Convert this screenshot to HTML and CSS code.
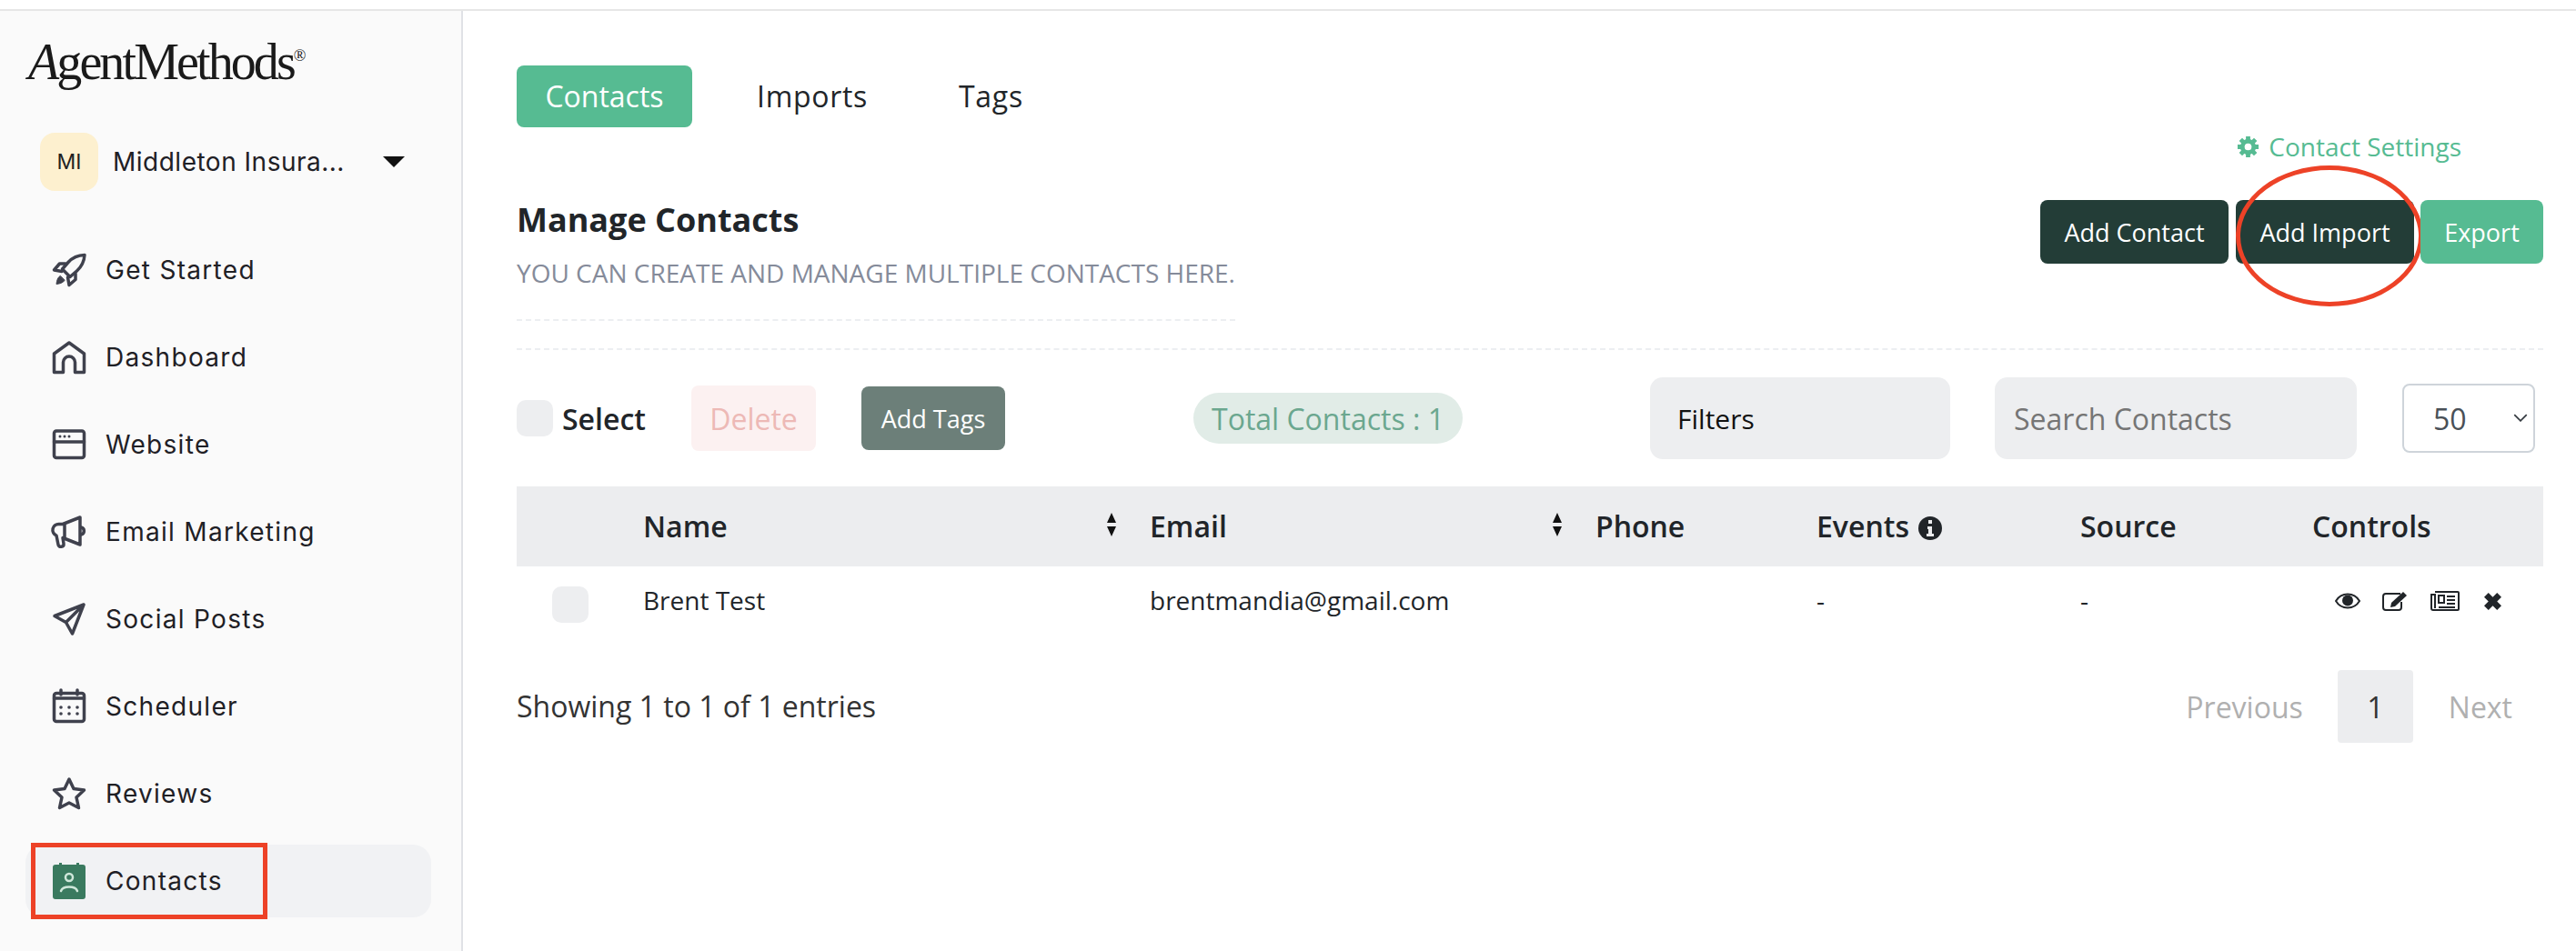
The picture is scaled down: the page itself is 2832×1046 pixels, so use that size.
FILE: index.html
```html
<!DOCTYPE html>
<html>
<head>
    <title>Contacts</title>
    <link rel="stylesheet" href="styles.css">
</head>
<body>

<div class="page">
    <aside class="sidebar">
        <div class="logo"><i>A</i>gentMethods<sup>®</sup></div>

        <div class="account">
            <span class="avatar">MI</span>
            <span class="account-name">Middleton Insura...</span>
            <span class="caret"></span>
        </div>

        <nav class="nav">
            <a class="nav-item">
                <svg class="nav-icon" viewBox="0 0 36 36">
                    <path d="M35 1.500c-7.500.2-13.500 3-18 8L10.500 17l8.500 8.500 7.500-6.500c5-4.500 8-10.500 8.500-17.500z"/>
                    <path d="M14 11H7.500L1.500 18l8.500 1.500M25 22v6.500L18 34.500 16.500 26"/>
                    <path class="solid" d="M8 24.500c-2.500 1.500-3.500 5-4 9 4-.5 7.500-1.500 9-4z"/>
                </svg>
                Get Started
            </a>
            <a class="nav-item">
                <svg class="nav-icon" viewBox="0 0 36 36">
                    <path d="M18 2 L34.500 14 V34.500 H24.500 V23.500 a6.500 6.500 0 0 0 -13 0 V34.500 H1.500 V14 Z"/>
                </svg>
                Dashboard
            </a>
            <a class="nav-item">
                <svg class="nav-icon" viewBox="0 0 36 36">
                    <rect x="1.500" y="3" width="33" height="29.500" rx="2.500"/>
                    <path d="M1.500 15H34.500"/>
                    <g class="dots"><circle cx="8" cy="9" r="1.500"/><circle cx="13" cy="9" r="1.500"/><circle cx="18" cy="9" r="1.500"/></g>
                </svg>
                Website
            </a>
            <a class="nav-item">
                <svg class="nav-icon" viewBox="0 0 36 36">
                    <path d="M30 2 L11 9.500 H7 a6.500 6.500 0 0 0 -3 12.500 L6 32 c.5 3.500 6.500 3 6-1 L11 24.500 L30 32 Z"/>
                    <path d="M13 10V24M31 13c4.500 1 4.500 7 0 8"/>
                </svg>
                Email Marketing
            </a>
            <a class="nav-item">
                <svg class="nav-icon" viewBox="0 0 36 36">
                    <path d="M34 2 L2 14.500 L14.500 21.500 L21.500 34 Z M34 2 L14.500 21.500"/>
                </svg>
                Social Posts
            </a>
            <a class="nav-item">
                <svg class="nav-icon" viewBox="0 0 36 36">
                    <rect x="1.500" y="3.500" width="33" height="31" rx="2.500"/>
                    <path d="M1.500 9H34.500M9 0V5M27 0V5"/>
                    <g class="dots">
                        <circle cx="9" cy="19" r="1.800"/><circle cx="18" cy="19" r="1.800"/><circle cx="27" cy="19" r="1.800"/>
                        <circle cx="9" cy="26" r="1.800"/><circle cx="18" cy="26" r="1.800"/><circle cx="27" cy="26" r="1.800"/>
                    </g>
                </svg>
                Scheduler
            </a>
            <a class="nav-item">
                <svg class="nav-icon" viewBox="0 0 36 36">
                    <path d="M18 2 L23 12.500 L34.500 14 L26 22 L28.500 33.500 L18 28 L7.500 33.500 L10 22 L1.500 14 L13 12.500 Z"/>
                </svg>
                Reviews
            </a>
            <a class="nav-item nav-active">
                <svg class="nav-icon" viewBox="0 0 36 40">
                    <path class="solid-green" d="M3 2h4V0h3v2h16V0h3v2h4a3 3 0 0 1 3 3v32a3 3 0 0 1-3 3H3a3 3 0 0 1-3-3V5a3 3 0 0 1 3-3z"/>
                    <circle class="light-line" cx="18" cy="16" r="4"/>
                    <path class="light-line" d="M9 31c2-6 16-6 18 0"/>
                </svg>
                Contacts
                <span class="mark-box"></span>
            </a>
        </nav>
    </aside>

    <main class="content">
        <div class="tabs">
            <a class="tab tab-active">Contacts</a>
            <a class="tab">Imports</a>
            <a class="tab">Tags</a>
        </div>

        <div class="head">
            <div class="head-text">
                <h2 class="title">Manage Contacts</h2>
                <p class="subtitle">YOU CAN CREATE AND MANAGE MULTIPLE CONTACTS HERE.</p>
            </div>
            <div class="head-actions">
                <a class="settings-link">
                    <svg class="gear" viewBox="0 0 26 26">
                        <path d="M13 1V25M1 13H25M4.500 4.500L21.500 21.500M21.500 4.500L4.500 21.500"/>
                        <circle class="gear-body" cx="13" cy="13" r="9"/>
                        <circle class="gear-hole" cx="13" cy="13" r="4"/>
                    </svg>
                    Contact Settings
                </a>
                <div class="head-buttons">
                    <a class="btn btn-dark btn-contact">Add Contact</a>
                    <a class="btn btn-dark btn-import">Add Import<span class="mark-ring"></span></a>
                    <a class="btn btn-green">Export</a>
                </div>
            </div>
        </div>

        <div class="toolbar">
            <input type="checkbox" class="check">
            <span class="select-all">Select</span>
            <a class="btn-delete">Delete</a>
            <a class="btn btn-tags">Add Tags</a>
            <span class="total">Total Contacts : 1</span>
            <div class="filters">Filters</div>
            <input type="text" class="search" placeholder="Search Contacts">
            <div class="page-size">
                <select><option>50</option></select>
                <svg class="chevron" viewBox="0 0 14 8"><path d="M1 1l6 6 6-6"/></svg>
            </div>
        </div>

        <table class="contacts">
            <colgroup>
                <col class="col-check"><col class="col-name"><col class="col-email"><col class="col-phone"><col class="col-events"><col class="col-source"><col class="col-controls">
            </colgroup>
            <thead>
                <tr>
                    <th></th>
                    <th><div class="sortable">Name <svg class="sort" viewBox="0 0 12 26"><path d="M6 0l5 11H1zM6 26L1 15h10z"/></svg></div></th>
                    <th><div class="sortable">Email <svg class="sort" viewBox="0 0 12 26"><path d="M6 0l5 11H1zM6 26L1 15h10z"/></svg></div></th>
                    <th>Phone</th>
                    <th>Events
                        <svg class="info" viewBox="0 0 26 26">
                            <circle cx="13" cy="13" r="13"/>
                            <path class="info-i" d="M10 11h5v8h2v3H9v-3h2v-5h-1zM11 4h4v4h-4z"/>
                        </svg>
                    </th>
                    <th>Source</th>
                    <th>Controls</th>
                </tr>
            </thead>
            <tbody>
                <tr>
                    <td><input type="checkbox" class="check check-row"></td>
                    <td>Brent Test</td>
                    <td>brentmandia@gmail.com</td>
                    <td></td>
                    <td>-</td>
                    <td>-</td>
                    <td>
                        <div class="controls">
                            <svg class="ctl ctl-eye" viewBox="0 0 28 18">
                                <path class="ctl-line" d="M1 9c6-10 20-10 26 0-6 10-20 10-26 0z"/>
                                <circle cx="14" cy="8.500" r="6"/>
                            </svg>
                            <svg class="ctl ctl-edit" viewBox="0 0 28 22">
                                <path class="ctl-line" d="M20 3H4a3 3 0 0 0-3 3v12a3 3 0 0 0 3 3h14a3 3 0 0 0 3-3v-6"/>
                                <path d="M23 1l4 4-13 12-5 1 1-5z"/>
                            </svg>
                            <svg class="ctl ctl-news" viewBox="0 0 32 22">
                                <path class="ctl-line" d="M5 1h25a1 1 0 0 1 1 1v18a1 1 0 0 1-1 1H3a2 2 0 0 1-2-2V4h4v15"/>
                                <path class="ctl-line" d="M18 6h9M18 10h9M18 14h9M9 18h18"/>
                                <rect class="ctl-line" x="9" y="5" width="6" height="8"/>
                            </svg>
                            <svg class="ctl ctl-x" viewBox="0 0 20 20">
                                <path d="M5 0l5 5 5-5 5 5-5 5 5 5-5 5-5-5-5 5-5-5 5-5-5-5z"/>
                            </svg>
                        </div>
                    </td>
                </tr>
            </tbody>
        </table>

        <div class="table-foot">
            <span class="entries">Showing 1 to 1 of 1 entries</span>
            <div class="pager">
                <a class="pager-link">Previous</a>
                <a class="pager-num">1</a>
                <a class="pager-link pager-next">Next</a>
            </div>
        </div>
    </main>
</div>

</body>
</html>
```

FILE: styles.css
```css
* {
    box-sizing: border-box;
}

html, body {
    margin: 0;
    height: 100%;
    overflow: hidden;
}

body {
    font-family: 'Open Sans', 'Liberation Sans', sans-serif;
    font-size: 28px;
    color: #212529;
    background: #fff;
}

.page {
    display: flex;
    height: calc(100% - 10px);
    margin-top: 10px;
    border-top: 2px solid #e6e6e6;
}

/* Sidebar */
.sidebar {
    flex: 0 0 509px;
    background: #fafafa;
    border-right: 2px solid #e0e2e6;
    padding: 29px 0 0 0;
}

.logo {
    font-family: 'Liberation Serif', serif;
    font-size: 56px;
    line-height: 54px;
    letter-spacing: -2.900px;
    color: #1a1a1a;
    padding-left: 31px;
    white-space: nowrap;
}

.logo sup {
    font-size: 18px;
    line-height: 0;
    vertical-align: 20px;
    letter-spacing: 0;
}

.account {
    display: flex;
    align-items: center;
    margin-top: 51px;
    padding-left: 44px;
}

.avatar {
    display: flex;
    align-items: center;
    justify-content: center;
    width: 64px;
    height: 64px;
    border-radius: 16px;
    background: #fdf0cf;
    font-family: 'Inter', sans-serif;
    font-size: 23px;
    color: #222;
}

.account-name {
    margin-left: 16px;
    width: 297px;
    font-family: 'Inter', sans-serif;
    font-size: 28px;
    letter-spacing: 0.500px;
    color: #1f2025;
    white-space: nowrap;
}

.caret {
    width: 0;
    height: 0;
    border-left: 12px solid transparent;
    border-right: 12px solid transparent;
    border-top: 12px solid #111;
}

.nav {
    display: flex;
    flex-direction: column;
    gap: 16px;
    margin: 47px 0 0 28px;
    width: 446px;
}

.nav-item {
    position: relative;
    display: flex;
    align-items: center;
    gap: 22px;
    height: 80px;
    padding-left: 30px;
    border-radius: 20px;
    font-family: 'Inter', sans-serif;
    font-size: 28px;
    letter-spacing: 1.300px;
    color: #1f2025;
}

.nav-active {
    background: #f1f2f4;
}

.nav-icon {
    flex: 0 0 36px;
    width: 36px;
    height: 36px;
    overflow: visible;
    fill: none;
    stroke: #3f414d;
    stroke-width: 3.500;
    stroke-linejoin: round;
    stroke-linecap: round;
}

.nav-icon .solid {
    fill: #3f414d;
    stroke-width: 1;
}

.nav-icon .dots {
    fill: #3f414d;
    stroke: none;
}

.nav-active .nav-icon {
    height: 40px;
}

.nav-icon .solid-green {
    fill: #3a7a5f;
    stroke: none;
}

.nav-icon .light-line {
    stroke: #cfe7da;
    stroke-width: 2.500;
}

/* red notes drawn over the screenshot */
.mark-box {
    position: absolute;
    left: 6px;
    top: -2px;
    width: 260px;
    height: 84px;
    border: 5px solid #ed4227;
}

.mark-ring {
    position: absolute;
    left: 0;
    top: -38px;
    width: 206px;
    height: 155px;
    border: 5px solid #ed4227;
    border-radius: 50%;
}

/* Main */
.content {
    flex: 1;
    min-width: 0;
    padding: 60px 36px 0 59px;
}

.tabs {
    display: flex;
}

.tab {
    display: flex;
    align-items: center;
    height: 68px;
    padding-bottom: 2px;
    font-size: 32px;
    letter-spacing: 0.700px;
    margin-left: 100px;
}

.tab-active {
    width: 193px;
    justify-content: center;
    background: #56bb92;
    color: #fff;
    border-radius: 8px;
    letter-spacing: 0;
    margin-left: 0;
}

.tab-active + .tab {
    margin-left: 71px;
}

.head {
    display: flex;
    justify-content: space-between;
    border-bottom: 2px dashed #eceef1;
}

.head-text {
    padding: 79px 0 0 0;
    margin-bottom: 30px;
    border-bottom: 2px dashed #eceef1;
    padding-bottom: 31px;
}

.title {
    margin: 0;
    font-size: 36px;
    line-height: 46px;
    font-weight: 700;
    color: #212529;
}

.subtitle {
    margin: 15px 0 0 0;
    font-size: 28px;
    line-height: 40px;
    color: #858b9a;
}

.head-actions {
    display: flex;
    flex-direction: column;
    align-items: flex-end;
}

.settings-link {
    display: flex;
    align-items: center;
    gap: 10px;
    margin: 1px 90px 0 0;
    line-height: 40px;
    color: #56bb92;
}

.gear {
    width: 25px;
    height: 25px;
}

.gear path {
    fill: none;
    stroke: #56bb92;
    stroke-width: 5;
}

.gear-body {
    fill: #56bb92;
}

.gear-hole {
    fill: #fff;
}

.head-buttons {
    display: flex;
    margin-top: 39px;
}

.btn {
    position: relative;
    display: flex;
    align-items: center;
    justify-content: center;
    height: 70px;
    border-radius: 8px;
    color: #fff;
    font-size: 27px;
    white-space: nowrap;
}

.btn-dark {
    background: #233d37;
}

.btn-green {
    width: 135px;
    margin-left: 7px;
    background: #56bb92;
}

.btn-contact {
    width: 207px;
}

.btn-import {
    width: 196px;
    margin-left: 8px;
}

.toolbar {
    display: flex;
    align-items: center;
    margin-top: 30px;
    height: 90px;
}

.check {
    flex: none;
    appearance: none;
    width: 40px;
    height: 40px;
    margin: 0;
    background: #edeef0;
    border-radius: 10px;
}

.select-all {
    width: 91px;
    margin-left: 10px;
    margin-right: 1px;
    font-size: 32px;
    font-weight: 600;
}

.btn-delete {
    display: flex;
    align-items: center;
    justify-content: center;
    width: 137px;
    height: 72px;
    margin-left: 50px;
    background: #fcf1f1;
    border-radius: 8px;
    color: #edb9b6;
    font-size: 32px;
}

.btn-tags {
    width: 158px;
    margin-left: 50px;
    background: #6c7f79;
}

.total {
    display: flex;
    align-items: center;
    justify-content: center;
    width: 296px;
    height: 56px;
    margin-left: 207px;
    background: #e1ece7;
    border-radius: 28px;
    color: #6ba78f;
    font-size: 32px;
    white-space: nowrap;
}

.filters {
    display: flex;
    align-items: center;
    width: 330px;
    height: 90px;
    margin-left: 206px;
    padding-left: 30px;
    background: #edeef0;
    border-radius: 14px;
    color: #111;
    font-size: 30px;
}

.search {
    width: 398px;
    height: 90px;
    margin-left: 49px;
    padding: 0 0 0 21px;
    border: 0;
    background: #edeef0;
    border-radius: 14px;
    font-family: inherit;
    font-size: 32px;
}

.page-size {
    position: relative;
    width: 146px;
    height: 76px;
    margin-left: 50px;
}

.page-size select {
    appearance: none;
    width: 100%;
    height: 100%;
    padding-left: 32px;
    border: 2px solid #ced4da;
    border-radius: 8px;
    background: #fff;
    color: #495057;
    font-family: inherit;
    font-size: 32px;
}

/* sits over the bare select */
.chevron {
    position: absolute;
    right: 8px;
    top: 33px;
    width: 16px;
    height: 9px;
    fill: none;
    stroke: #343a40;
    stroke-width: 1.500;
}

/* Table */
.contacts {
    width: 100%;
    margin-top: 30px;
    border-collapse: collapse;
    table-layout: fixed;
}

.col-check { width: 139px; }
.col-name { width: 557px; }
.col-email { width: 490px; }
.col-phone { width: 243px; }
.col-events { width: 290px; }
.col-source { width: 255px; }
.col-controls { width: 254px; }

.contacts th {
    height: 88px;
    padding: 0 0 2px 0;
    background: #ecedef;
    text-align: left;
    font-size: 32px;
    font-weight: 600;
    white-space: nowrap;
}

.contacts td {
    height: 76px;
    padding: 0 0 2px 0;
}

.sortable {
    display: flex;
    align-items: center;
    justify-content: space-between;
    padding-right: 36px;
}

.sort {
    width: 12px;
    height: 26px;
    fill: #111;
    margin-top: -2px;
}

.info {
    width: 26px;
    height: 26px;
    margin-left: 2px;
    vertical-align: -3px;
    fill: #212529;
}

.info .info-i {
    fill: #ecedef;
}

.check-row {
    display: block;
    margin: 10px 0 0 39px;
}

.controls {
    display: flex;
    align-items: center;
    margin: 2px 0 0 25px;
}

.ctl {
    flex: none;
    fill: #212529;
}

.ctl-line {
    fill: none;
    stroke: #212529;
    stroke-width: 2;
}

.ctl-eye { width: 28px; height: 18px; }
.ctl-edit { width: 28px; height: 22px; margin-left: 24px; }
.ctl-news { width: 32px; height: 22px; margin-left: 25px; }
.ctl-x { width: 19px; height: 19px; margin-left: 27px; }

.table-foot {
    display: flex;
    justify-content: space-between;
    align-items: center;
    margin-top: 38px;
}

.entries {
    padding-bottom: 2px;
    font-size: 32px;
    color: #333;
}

.pager {
    display: flex;
    align-items: center;
    font-size: 32px;
}

.pager-link {
    color: #b0b0b0;
}

.pager-num {
    display: flex;
    align-items: center;
    justify-content: center;
    width: 83px;
    height: 80px;
    margin-left: 38px;
    background: #ecedef;
    border-radius: 4px;
    color: #333;
}

.pager-next {
    margin: 0 34px 0 39px;
}
```
